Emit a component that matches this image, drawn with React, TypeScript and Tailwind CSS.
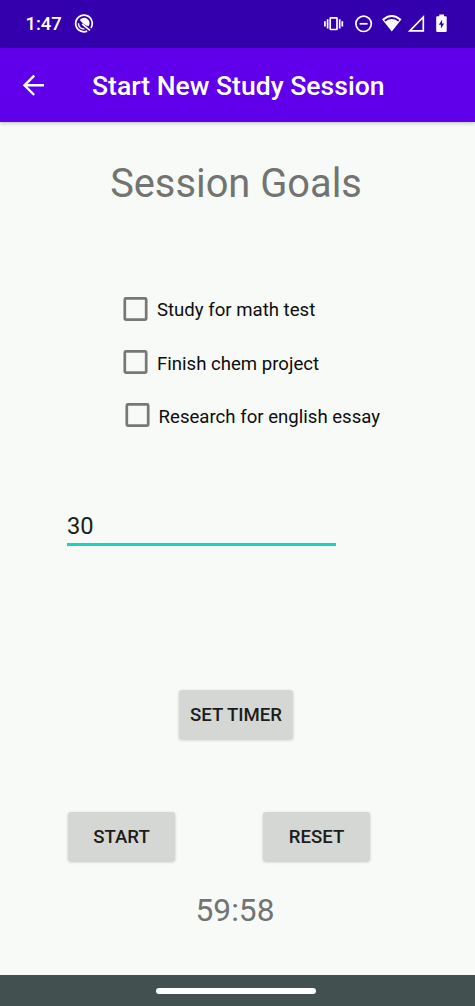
import { ReactNode } from 'react'

const StatusBar = () => (
    <div className="h-12 bg-[#3400ad] flex items-center text-white">
        <span className="ml-[25.5px] w-[48.5px] text-[18.4px] leading-6 font-medium whitespace-nowrap">1:47</span>

        {/* Notification icon */}
        <svg className="w-5 h-5" viewBox="0 0 20 20" fill="none" stroke="currentColor">
            <path d="M16.9 14A8.3 8.3 0 1 0 13.2 17.1" strokeWidth="1.7" />
            <path d="M5.6 6.3A5.4 5.4 0 0 1 14.7 12.2L12.6 10.9Q10 7.2 5.6 6.3Z" fill="currentColor" stroke="none" />
            <path d="M6.2 6.6Q11.2 5.6 13.9 12.4L9 9.4Z" fill="currentColor" stroke="none" />
            <path d="M8.2 10.2L16 16.4" strokeWidth="1.7" />
            <path d="M4.5 9.2A5.2 5.2 0 0 0 10.4 14.8" strokeWidth="1.4" />
        </svg>

        {/* Vibrate */}
        <svg className="ml-[230px] w-5 h-5" viewBox="0 0 20 20" fill="none" stroke="currentColor" strokeWidth="1.7">
            <rect x="6.2" y="3.9" width="6.8" height="11.6" rx="0.6" />
            <path d="M3.6 5.2V14.4M.9 7.2V12.4M15.7 5.2V14.4M18.3 7.2V12.4" />
        </svg>

        {/* Do not disturb */}
        <svg className="ml-[10px] w-5 h-5" viewBox="0 0 20 20" fill="none" stroke="currentColor" strokeWidth="1.7">
            <circle cx="9.6" cy="9.8" r="7.7" />
            <path d="M5.6 9.8H13.6" />
        </svg>

        {/* Wifi */}
        <svg className="ml-[8px] w-5 h-5" viewBox="0 0 20 20">
            <path d="M0 5.3Q9.8-3.2 19.5 5.3L9.8 17.5Z" fill="currentColor" />
            <path d="M2.2 6Q9.8.2 17.3 6L16.2 7.4Q9.8 2.8 3.4 7.4Z" fill="#3400ad" />
        </svg>

        {/* Cell signal */}
        <svg className="ml-[6px] w-[18px] h-5" viewBox="0 0 18 20" fill="none" stroke="currentColor" strokeWidth="1.7">
            <path d="M1.8 16.8H15.3V3Z" />
        </svg>

        {/* Battery */}
        <svg className="ml-[10px] w-3 h-5" viewBox="0 0 12 20">
            <path d="M3.3.4H8V2.2H9.7A1 1 0 0 1 10.7 3.2V17A1 1 0 0 1 9.7 18H1.2A1 1 0 0 1 .2 17V3.2A1 1 0 0 1 1.2 2.2H3.3Z" fill="currentColor" />
            <path d="M6.1 5.8L2.8 10.8H4.9V14.6L8.2 9.6H6.1Z" fill="#3400ad" />
        </svg>
    </div>
)

const AppBar = () => (
    <header className="relative h-[74px] bg-[#6000ea] flex items-center text-white shadow-[0_1px_4px_rgba(0,0,0,0.25)]">
        <svg className="ml-[22px] w-6 h-6" viewBox="0 0 24 24" fill="none" stroke="currentColor" strokeWidth="2.4">
            <path d="M22 12.3H2.5M12.2 2.6L2.5 12.3L12.2 22" />
        </svg>
        <h1 className="ml-[46px] pt-[2px] text-[26.55px] leading-8 font-medium whitespace-nowrap">Start New Study Session</h1>
    </header>
)

const Goal = ({ children, className = '' }: { children: ReactNode, className?: string }) => (
    <label className={`flex items-center h-[53.3px] ${className}`}>
        <svg className="w-[25px] h-[25px]" viewBox="0 0 25 25" fill="none">
            <rect x="1.8" y="1.3" width="21.4" height="21.4" rx="1.4" stroke="#767876" strokeWidth="2.7" />
        </svg>
        <span className="ml-[9px] pt-[2px] text-[18.6px] leading-6 text-[#0c0d0c] whitespace-nowrap">{children}</span>
    </label>
)

const Button = ({ children, className }: { children: ReactNode, className: string }) => (
    <button className={`h-[49px] pt-[2px] rounded-[3px] bg-[#d5d7d4] text-[18.6px] leading-6 font-medium text-[#1b1c1b] whitespace-nowrap shadow-[0_1px_3px_rgba(0,0,0,0.22)] ${className}`}>
        {children}
    </button>
)

export default function App() {
    return (
        <div className="w-[475px] h-[1006px] flex flex-col overflow-hidden bg-[#f8faf7] font-['Roboto',sans-serif]">
            <StatusBar />
            <AppBar />

            <main className="flex-1 flex flex-col">
                <h2 className="mt-[38px] pr-[3px] text-center text-[39.8px] leading-[48px] text-[#727472]">Session Goals</h2>

                <div className="mt-[74.7px] ml-[123px] flex flex-col">
                    <Goal>Study for math test</Goal>
                    <Goal>Finish chem project</Goal>
                    <Goal className="ml-[1.6px]">Research for english essay</Goal>
                </div>

                <div className="mt-[67.3px] ml-[67px] w-[269px] h-[36px] border-b-[3px] border-[#1ad2c0] text-[23.7px] leading-[32px] text-[#1d1e1d]">
                    30
                </div>

                <Button className="mt-[144px] ml-[179px] w-[114px]">SET TIMER</Button>

                <div className="mt-[73px] ml-[68px] flex gap-[88px]">
                    <Button className="w-[107px]">START</Button>
                    <Button className="w-[107px]">RESET</Button>
                </div>

                <p className="mt-[30px] pr-[5px] text-center text-[31.7px] leading-[40px] text-[#727472]">59:58</p>
            </main>

            {/* Gesture navigation bar */}
            <div className="h-[31px] bg-[#435050] flex items-center justify-center">
                <div className="w-[160px] h-[6px] mr-[3px] rounded-full bg-white" />
            </div>
        </div>
    )
}
